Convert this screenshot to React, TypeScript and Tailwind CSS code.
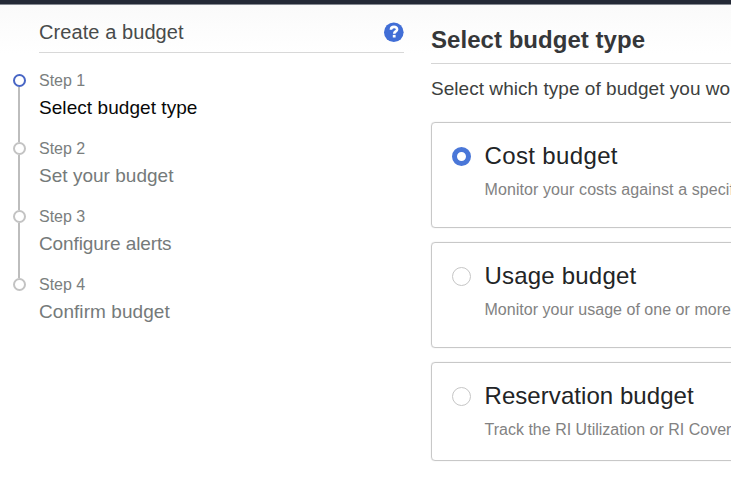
const steps = [
  { label: 'Step 1', title: 'Select budget type', spacing: 'tracking-[0.06px]' },
  { label: 'Step 2', title: 'Set your budget', spacing: 'tracking-[0.02px]' },
  { label: 'Step 3', title: 'Configure alerts', spacing: 'tracking-[-0.1px]' },
  { label: 'Step 4', title: 'Confirm budget', spacing: 'tracking-[0.06px]' },
];

const options = [
  { title: 'Cost budget', text: 'Monitor your costs against a specif', selected: true, size: 'h-[106px]', spacing: 'tracking-[0.36px]', textSpacing: 'tracking-[0.09px]' },
  { title: 'Usage budget', text: 'Monitor your usage of one or more', selected: false, size: 'h-[106px]', spacing: 'tracking-[0.2px]', textSpacing: 'tracking-[0.03px]' },
  { title: 'Reservation budget', text: 'Track the RI Utilization or RI Covera', selected: false, size: 'h-[99px]', spacing: 'tracking-[0.06px]', textSpacing: 'tracking-[0.01px]' },
];

function HelpIcon() {
  return (
    <svg width="20" height="20" viewBox="0 0 20 20" aria-label="Help">
      <circle cx="9.8" cy="10.2" r="9.8" fill="#416ed6" />
      <path d="M6.9 7.8C7 5.8 8.2 4.9 10 4.9s3.1 1 3.1 2.5c0 2-2.9 2-2.9 4.3" fill="none" stroke="#fff" strokeWidth="2.6" />
      <rect x="8.8" y="12.9" width="2.8" height="2.6" fill="#fff" />
    </svg>
  );
}

function Step({ label, title, spacing, index }: { label: string; title: string; spacing: string; index: number }) {
  const active = index === 0;
  const last = index === steps.length - 1;
  return (
    <li className="flex h-[68px]">
      <div className="-mt-[0.5px] flex w-[26.5px] shrink-0 flex-col items-start">
        <span className={`h-[13px] w-[13px] shrink-0 rounded-full border-2 bg-white ${active ? 'border-[#4866c5]' : 'border-[#c3c3c3]'}`} />
        {!last && <span className="ml-[5.5px] w-[2px] flex-1 bg-[#bdbdbd]" />}
      </div>
      <div className="-mt-[3px] whitespace-nowrap">
        <div className="text-[16px] leading-[20px] text-[#7a7e7e]">{label}</div>
        <div className={`mt-[6px] text-[19px] leading-[22px] ${spacing} ${active ? 'text-[#080808]' : 'text-[#757a7a]'}`}>{title}</div>
      </div>
    </li>
  );
}

export default function App() {
  return (
    <div className="flex h-[489px] w-[731px] flex-col overflow-hidden bg-white font-['Liberation_Sans',Arial,sans-serif]">
      <header className="h-[5px] shrink-0 border-b border-[#858991] bg-[#242936]" />
      <div className="flex flex-1 bg-linear-to-b from-[#fafafa] to-white to-[48px]">
        <aside className="flex w-[404px] shrink-0 flex-col pl-[12.5px]">
          <div className="ml-[26.5px] flex h-[48px] items-start justify-between border-b border-[#d8d8d8] pt-[17px]">
            <h2 className="-mt-px text-[20px] leading-[22px] tracking-[0.08px] text-[#484b4b]">Create a budget</h2>
            <HelpIcon />
          </div>
          <ol className="mt-[21px]">
            {steps.map((step, index) => (
              <Step key={step.label} {...step} index={index} />
            ))}
          </ol>
        </aside>
        <main className="ml-[27px] flex w-[340px] shrink-0 flex-col whitespace-nowrap">
          <h1 className="h-[59px] border-b border-[#d5d5d5] pt-[21px] text-[24px] font-bold leading-[28px] tracking-[0.04px] text-[#353739]">Select budget type</h1>
          <p className="mt-[14px] text-[19px] leading-[22px] tracking-[0.04px] text-[#3d3f40]">Select which type of budget you wo</p>
          <div className="mt-[22px] flex flex-col gap-[14px]">
            {options.map((option) => (
              <label key={option.title} className={`flex rounded-[4px] border-[1.5px] border-[#c8c8c8] pl-[20px] shadow-[0_0_1px_#c8c8c8] ${option.size}`}>
                <span className={`mt-[24px] h-[19px] w-[19px] shrink-0 rounded-full bg-white ${option.selected ? 'border-[5px] border-[#4a77d8]' : 'border-[1.5px] border-[#c6c6c6]'}`} />
                <div className="ml-[13.5px] pt-[19px]">
                  <div className={`text-[24px] leading-[28px] text-[#222426] ${option.spacing}`}>{option.title}</div>
                  <div className={`mt-[10px] text-[16px] leading-[20px] text-[#828282] ${option.textSpacing}`}>{option.text}</div>
                </div>
              </label>
            ))}
          </div>
        </main>
      </div>
    </div>
  );
}
